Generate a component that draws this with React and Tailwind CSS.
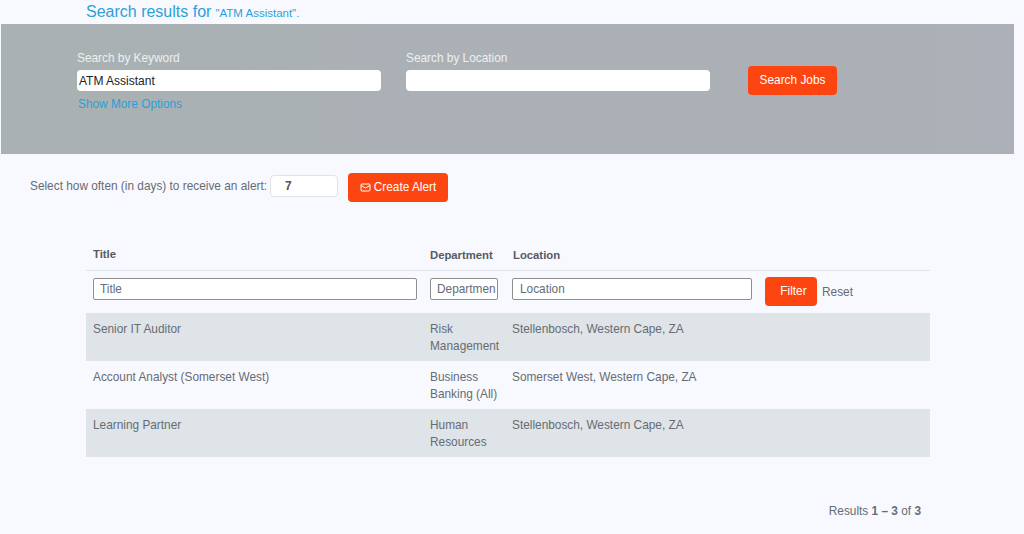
import React from "react";

const jobs = [
  { title: "Senior IT Auditor", dept: ["Risk", "Management"], location: "Stellenbosch, Western Cape, ZA", shaded: true },
  { title: "Account Analyst (Somerset West)", dept: ["Business", "Banking (All)"], location: "Somerset West, Western Cape, ZA", shaded: false },
  { title: "Learning Partner", dept: ["Human", "Resources"], location: "Stellenbosch, Western Cape, ZA", shaded: true },
];

const orangeBtn = "bg-[#fc4510] text-white rounded-[4px] flex items-center justify-center";

const App = () => {
  return (
    <div className="w-[1024px] h-[534px] overflow-hidden bg-[#f8f9fe] text-[#666c74] text-[11.85px] font-['Liberation_Sans',Arial,sans-serif]">
      {/* Heading */}
      <div className="h-[24px] pl-[86px] pt-[2px] flex items-baseline text-[#2d9fd8]">
        <span className="text-[16px] leading-[19px]">Search results for</span>
        <span className="text-[11.5px] ml-[4px]">"ATM Assistant".</span>
      </div>

      {/* Search panel */}
      <div className="ml-[1px] w-[1013px] h-[130px] bg-gradient-to-r from-[#a9b1b3] to-[#acb0b8] pl-[76px] pt-[27px] flex">
        <div className="w-[304px] mr-[25px]">
          <div className="text-white/80 leading-[14px] mb-[5px]">Search by Keyword</div>
          <div className="h-[21px] bg-white rounded-[4px] pl-[2px] flex items-center text-[12px] text-[#222]">ATM Assistant</div>
          <div className="text-[#2d9fd8] leading-[14px] mt-[6px] ml-[1px]">Show More Options</div>
        </div>
        <div className="w-[304px] mr-[38px]">
          <div className="text-white/80 leading-[14px] mb-[5px]">Search by Location</div>
          <div className="h-[21px] bg-white rounded-[4px]"></div>
        </div>
        <div className={`${orangeBtn} w-[89px] h-[29px] mt-[15px] pt-[1px]`}>Search Jobs</div>
      </div>

      {/* Alert row */}
      <div className="h-[84px] pl-[30px] pt-[19px] flex items-start">
        <span className="mt-[6px] leading-[14px]">Select how often (in days) to receive an alert:</span>
        <div className="w-[68px] h-[22px] ml-[3px] mt-[2px] bg-white border border-[#dfe2e6] rounded-[4px] pl-[14px] flex items-center text-[12px] font-bold text-[#555]">7</div>
        <div className={`${orangeBtn} w-[100px] h-[29px] ml-[10px] gap-[3px]`}>
          <svg width="11" height="9" viewBox="0 0 11 9" fill="none" stroke="white" strokeWidth="1">
            <rect x="1" y="1" width="9" height="7" rx="1" />
            <path d="M1 2.5 5.5 5 10 2.5" />
          </svg>
          Create Alert
        </div>
      </div>

      {/* Results table */}
      <div className="ml-[86px] w-[844px]">
        <div className="h-[33px] flex items-center border-b border-[#e0e3e7] font-bold text-[11.3px] text-[#555b63] pt-[2px]">
          <div className="w-[337px] pl-[7px] pb-[1px]">Title</div>
          <div className="w-[82px] pl-[7px]">Department</div>
          <div className="pl-[8px]">Location</div>
        </div>

        <div className="h-[42px] flex pt-[7px]">
          <div className="w-[337px] pl-[7px]">
            <div className="w-[324px] h-[22px] bg-white border border-[#8f8f8f] rounded-[2px] pl-[6px] pt-[1px] flex items-center">Title</div>
          </div>
          <div className="w-[82px] pl-[7px]">
            <div className="w-[68px] h-[22px] bg-white border border-[#8f8f8f] rounded-[2px] pl-[6px] pt-[1px] flex items-center overflow-hidden whitespace-nowrap">Departmen</div>
          </div>
          <div className="w-[260px] pl-[7px]">
            <div className="w-[240px] h-[22px] bg-white border border-[#8f8f8f] rounded-[2px] pl-[7px] pt-[1px] flex items-center">Location</div>
          </div>
          <div className={`${orangeBtn} w-[52px] h-[29px] -mt-[1px] pt-[1px] pl-[5px]`}>Filter</div>
          <div className="ml-[5px] mt-[7px] leading-[14px]">Reset</div>
        </div>

        {jobs.map((job) => (
          <div key={job.title} className={`h-[48px] flex pt-[8px] leading-[17px] ${job.shaded ? "bg-[#dee4e8]" : ""}`}>
            <div className="w-[337px] pl-[7px]">{job.title}</div>
            <div className="w-[82px] pl-[7px]">
              {job.dept.map((line) => (
                <div key={line}>{line}</div>
              ))}
            </div>
            <div className="pl-[7px]">{job.location}</div>
          </div>
        ))}
      </div>

      {/* Pagination summary */}
      <div className="w-[921px] mt-[47px] text-right leading-[14px]">
        Results <b>1 – 3</b> of <b>3</b>
      </div>
    </div>
  );
};

export default App;
